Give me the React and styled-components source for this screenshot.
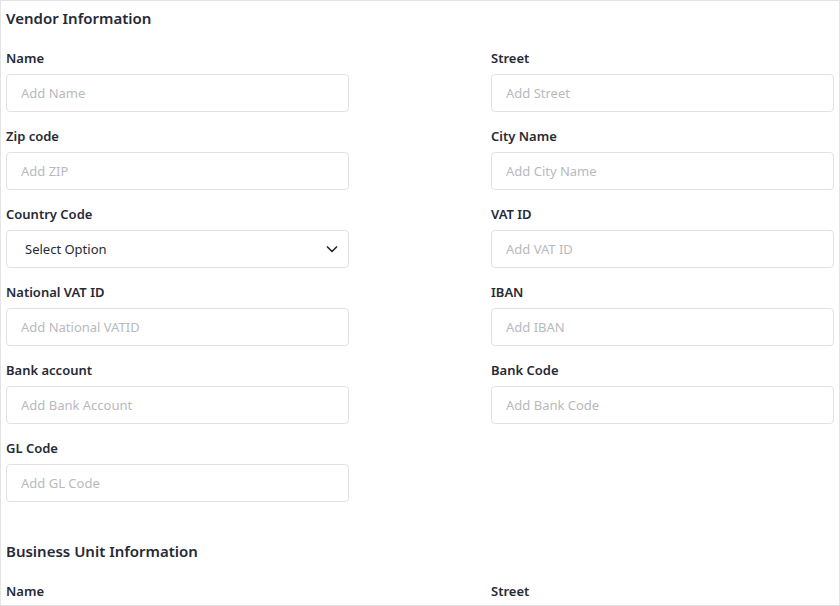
import styled, { createGlobalStyle } from "styled-components";

const GlobalStyle = createGlobalStyle`
  html, body {
    margin: 0;
    padding: 0;
    background: #fff;
  }
  * {
    box-sizing: border-box;
  }
`;

const Panel = styled.div`
  width: 840px;
  height: 606px;
  overflow: hidden;
  border: 1px solid #e4e4e4;
  padding: 7px 5px 0;
  font-family: "Noto Sans", "Open Sans", sans-serif;
  color: #262a36;
  display: flex;
  flex-direction: column;
  gap: 39px;
`;

const Section = styled.section`
  display: flex;
  flex-direction: column;
  gap: 21px;
`;

const SectionTitle = styled.h2`
  margin: 0;
  font-size: 15px;
  line-height: 20px;
  font-weight: 600;
`;

const FieldGrid = styled.div`
  display: grid;
  grid-template-columns: 343px 343px;
  justify-content: space-between;
  row-gap: 15px;
`;

const Field = styled.div`
  display: flex;
  flex-direction: column;
  gap: 7px;
`;

const Label = styled.label`
  font-size: 13px;
  line-height: 18px;
  font-weight: 600;
`;

const Input = styled.input`
  height: 38px;
  width: 100%;
  border: 1px solid #e1e1e1;
  border-radius: 4px;
  padding: 0 14px;
  font-family: inherit;
  font-size: 13px;
  color: #262a36;
  outline: none;
  &::placeholder {
    color: #b9b9bd;
  }
`;

const SelectBox = styled.div`
  height: 38px;
  border: 1px solid #e1e1e1;
  border-radius: 4px;
  padding: 0 9px 0 18px;
  display: flex;
  align-items: center;
  justify-content: space-between;
  font-size: 13px;
  color: #262a36;
`;

const Chevron = () => (
  <svg width="14" height="14" viewBox="0 0 14 14" fill="none">
    <path d="M2.5 5l4.5 4.5 4.5-4.5" stroke="#262a36" strokeWidth="1.7" strokeLinecap="round" strokeLinejoin="round" />
  </svg>
);

const vendorFields = [
  { label: "Name", placeholder: "Add Name" },
  { label: "Street", placeholder: "Add Street" },
  { label: "Zip code", placeholder: "Add ZIP" },
  { label: "City Name", placeholder: "Add City Name" },
  { label: "Country Code", select: "Select Option" },
  { label: "VAT ID", placeholder: "Add VAT ID" },
  { label: "National VAT ID", placeholder: "Add National VATID" },
  { label: "IBAN", placeholder: "Add IBAN" },
  { label: "Bank account", placeholder: "Add Bank Account" },
  { label: "Bank Code", placeholder: "Add Bank Code" },
  { label: "GL Code", placeholder: "Add GL Code" },
];

const businessFields = [
  { label: "Name", placeholder: "Add Name" },
  { label: "Street", placeholder: "Add Street" },
];

function FormField({ label, placeholder, select }) {
  return (
    <Field>
      <Label>{label}</Label>
      {select ? (
        <SelectBox>
          {select}
          <Chevron />
        </SelectBox>
      ) : (
        <Input placeholder={placeholder} />
      )}
    </Field>
  );
}

export default function App() {
  return (
    <>
      <GlobalStyle />
      <Panel>
        <Section>
          <SectionTitle>Vendor Information</SectionTitle>
          <FieldGrid>
            {vendorFields.map((f) => (
              <FormField key={f.label} {...f} />
            ))}
          </FieldGrid>
        </Section>
        <Section>
          <SectionTitle>Business Unit Information</SectionTitle>
          <FieldGrid>
            {businessFields.map((f) => (
              <FormField key={f.label} {...f} />
            ))}
          </FieldGrid>
        </Section>
      </Panel>
    </>
  );
}
